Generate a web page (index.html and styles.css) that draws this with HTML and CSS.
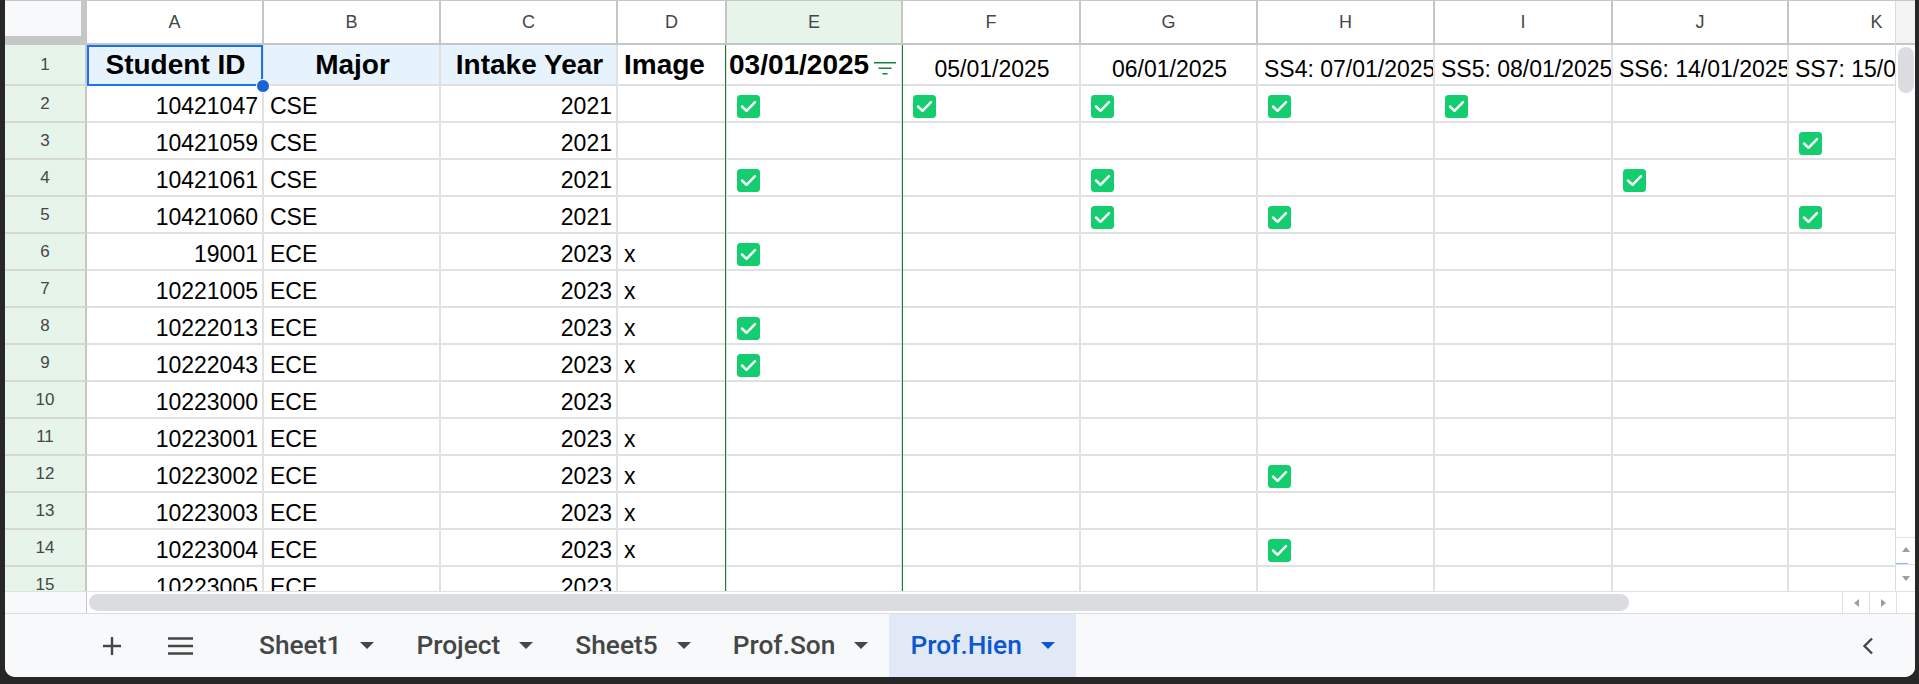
FILE: index.html
```html
<!DOCTYPE html>
<html>
<head>
<meta charset="utf-8">
<title>Sheet</title>
<link rel="stylesheet" href="styles.css">
</head>
<body>
<div class="window">
  <div class="main">
    <div class="grid">
      <div class="row hdr">
        <div class="c col-rh corner"></div>
        <div class="c col-a">A</div>
        <div class="c col-b">B</div>
        <div class="c col-c">C</div>
        <div class="c col-d">D</div>
        <div class="c col-e sel-col">E</div>
        <div class="c col-f">F</div>
        <div class="c col-g">G</div>
        <div class="c col-h">H</div>
        <div class="c col-i">I</div>
        <div class="c col-j">J</div>
        <div class="c col-k">K</div>
      </div>
      <div class="row r1">
        <div class="c rh col-rh">1</div>
        <div class="c col-a ctr blue sel">Student ID<span class="handle"></span></div>
        <div class="c col-b ctr blue">Major</div>
        <div class="c col-c ctr blue">Intake Year</div>
        <div class="c col-d">Image</div>
        <div class="c col-e es e1">03/01/2025<svg class="filt" viewBox="0 0 22 14"><path d="M0 1.75H22M4.5 7.25H17.5M8.5 12.75H13.5"/></svg></div>
        <div class="c col-f ctr reg">05/01/2025</div>
        <div class="c col-g ctr reg">06/01/2025</div>
        <div class="c col-h reg">SS4: 07/01/2025</div>
        <div class="c col-i reg">SS5: 08/01/2025</div>
        <div class="c col-j reg">SS6: 14/01/2025</div>
        <div class="c col-k reg">SS7: 15/01/2025</div>
      </div>
      <div class="row">
        <div class="c rh col-rh">2</div>
        <div class="c col-a num">10421047</div>
        <div class="c col-b">CSE</div>
        <div class="c col-c num">2021</div>
        <div class="c col-d"></div>
        <div class="c col-e es"><svg class="chk" viewBox="0 0 23 23"><rect width="23" height="23" rx="3.5"/><path d="M5 11.5L9.5 15.8L18 7.2"/></svg></div>
        <div class="c col-f"><svg class="chk" viewBox="0 0 23 23"><rect width="23" height="23" rx="3.5"/><path d="M5 11.5L9.5 15.8L18 7.2"/></svg></div>
        <div class="c col-g"><svg class="chk" viewBox="0 0 23 23"><rect width="23" height="23" rx="3.5"/><path d="M5 11.5L9.5 15.8L18 7.2"/></svg></div>
        <div class="c col-h"><svg class="chk" viewBox="0 0 23 23"><rect width="23" height="23" rx="3.5"/><path d="M5 11.5L9.5 15.8L18 7.2"/></svg></div>
        <div class="c col-i"><svg class="chk" viewBox="0 0 23 23"><rect width="23" height="23" rx="3.5"/><path d="M5 11.5L9.5 15.8L18 7.2"/></svg></div>
        <div class="c col-j"></div>
        <div class="c col-k"></div>
      </div>
      <div class="row">
        <div class="c rh col-rh">3</div>
        <div class="c col-a num">10421059</div>
        <div class="c col-b">CSE</div>
        <div class="c col-c num">2021</div>
        <div class="c col-d"></div>
        <div class="c col-e es"></div>
        <div class="c col-f"></div>
        <div class="c col-g"></div>
        <div class="c col-h"></div>
        <div class="c col-i"></div>
        <div class="c col-j"></div>
        <div class="c col-k"><svg class="chk" viewBox="0 0 23 23"><rect width="23" height="23" rx="3.5"/><path d="M5 11.5L9.5 15.8L18 7.2"/></svg></div>
      </div>
      <div class="row">
        <div class="c rh col-rh">4</div>
        <div class="c col-a num">10421061</div>
        <div class="c col-b">CSE</div>
        <div class="c col-c num">2021</div>
        <div class="c col-d"></div>
        <div class="c col-e es"><svg class="chk" viewBox="0 0 23 23"><rect width="23" height="23" rx="3.5"/><path d="M5 11.5L9.5 15.8L18 7.2"/></svg></div>
        <div class="c col-f"></div>
        <div class="c col-g"><svg class="chk" viewBox="0 0 23 23"><rect width="23" height="23" rx="3.5"/><path d="M5 11.5L9.5 15.8L18 7.2"/></svg></div>
        <div class="c col-h"></div>
        <div class="c col-i"></div>
        <div class="c col-j"><svg class="chk" viewBox="0 0 23 23"><rect width="23" height="23" rx="3.5"/><path d="M5 11.5L9.5 15.8L18 7.2"/></svg></div>
        <div class="c col-k"></div>
      </div>
      <div class="row">
        <div class="c rh col-rh">5</div>
        <div class="c col-a num">10421060</div>
        <div class="c col-b">CSE</div>
        <div class="c col-c num">2021</div>
        <div class="c col-d"></div>
        <div class="c col-e es"></div>
        <div class="c col-f"></div>
        <div class="c col-g"><svg class="chk" viewBox="0 0 23 23"><rect width="23" height="23" rx="3.5"/><path d="M5 11.5L9.5 15.8L18 7.2"/></svg></div>
        <div class="c col-h"><svg class="chk" viewBox="0 0 23 23"><rect width="23" height="23" rx="3.5"/><path d="M5 11.5L9.5 15.8L18 7.2"/></svg></div>
        <div class="c col-i"></div>
        <div class="c col-j"></div>
        <div class="c col-k"><svg class="chk" viewBox="0 0 23 23"><rect width="23" height="23" rx="3.5"/><path d="M5 11.5L9.5 15.8L18 7.2"/></svg></div>
      </div>
      <div class="row">
        <div class="c rh col-rh">6</div>
        <div class="c col-a num">19001</div>
        <div class="c col-b">ECE</div>
        <div class="c col-c num">2023</div>
        <div class="c col-d">x</div>
        <div class="c col-e es"><svg class="chk" viewBox="0 0 23 23"><rect width="23" height="23" rx="3.5"/><path d="M5 11.5L9.5 15.8L18 7.2"/></svg></div>
        <div class="c col-f"></div>
        <div class="c col-g"></div>
        <div class="c col-h"></div>
        <div class="c col-i"></div>
        <div class="c col-j"></div>
        <div class="c col-k"></div>
      </div>
      <div class="row">
        <div class="c rh col-rh">7</div>
        <div class="c col-a num">10221005</div>
        <div class="c col-b">ECE</div>
        <div class="c col-c num">2023</div>
        <div class="c col-d">x</div>
        <div class="c col-e es"></div>
        <div class="c col-f"></div>
        <div class="c col-g"></div>
        <div class="c col-h"></div>
        <div class="c col-i"></div>
        <div class="c col-j"></div>
        <div class="c col-k"></div>
      </div>
      <div class="row">
        <div class="c rh col-rh">8</div>
        <div class="c col-a num">10222013</div>
        <div class="c col-b">ECE</div>
        <div class="c col-c num">2023</div>
        <div class="c col-d">x</div>
        <div class="c col-e es"><svg class="chk" viewBox="0 0 23 23"><rect width="23" height="23" rx="3.5"/><path d="M5 11.5L9.5 15.8L18 7.2"/></svg></div>
        <div class="c col-f"></div>
        <div class="c col-g"></div>
        <div class="c col-h"></div>
        <div class="c col-i"></div>
        <div class="c col-j"></div>
        <div class="c col-k"></div>
      </div>
      <div class="row">
        <div class="c rh col-rh">9</div>
        <div class="c col-a num">10222043</div>
        <div class="c col-b">ECE</div>
        <div class="c col-c num">2023</div>
        <div class="c col-d">x</div>
        <div class="c col-e es"><svg class="chk" viewBox="0 0 23 23"><rect width="23" height="23" rx="3.5"/><path d="M5 11.5L9.5 15.8L18 7.2"/></svg></div>
        <div class="c col-f"></div>
        <div class="c col-g"></div>
        <div class="c col-h"></div>
        <div class="c col-i"></div>
        <div class="c col-j"></div>
        <div class="c col-k"></div>
      </div>
      <div class="row">
        <div class="c rh col-rh">10</div>
        <div class="c col-a num">10223000</div>
        <div class="c col-b">ECE</div>
        <div class="c col-c num">2023</div>
        <div class="c col-d"></div>
        <div class="c col-e es"></div>
        <div class="c col-f"></div>
        <div class="c col-g"></div>
        <div class="c col-h"></div>
        <div class="c col-i"></div>
        <div class="c col-j"></div>
        <div class="c col-k"></div>
      </div>
      <div class="row">
        <div class="c rh col-rh">11</div>
        <div class="c col-a num">10223001</div>
        <div class="c col-b">ECE</div>
        <div class="c col-c num">2023</div>
        <div class="c col-d">x</div>
        <div class="c col-e es"></div>
        <div class="c col-f"></div>
        <div class="c col-g"></div>
        <div class="c col-h"></div>
        <div class="c col-i"></div>
        <div class="c col-j"></div>
        <div class="c col-k"></div>
      </div>
      <div class="row">
        <div class="c rh col-rh">12</div>
        <div class="c col-a num">10223002</div>
        <div class="c col-b">ECE</div>
        <div class="c col-c num">2023</div>
        <div class="c col-d">x</div>
        <div class="c col-e es"></div>
        <div class="c col-f"></div>
        <div class="c col-g"></div>
        <div class="c col-h"><svg class="chk" viewBox="0 0 23 23"><rect width="23" height="23" rx="3.5"/><path d="M5 11.5L9.5 15.8L18 7.2"/></svg></div>
        <div class="c col-i"></div>
        <div class="c col-j"></div>
        <div class="c col-k"></div>
      </div>
      <div class="row">
        <div class="c rh col-rh">13</div>
        <div class="c col-a num">10223003</div>
        <div class="c col-b">ECE</div>
        <div class="c col-c num">2023</div>
        <div class="c col-d">x</div>
        <div class="c col-e es"></div>
        <div class="c col-f"></div>
        <div class="c col-g"></div>
        <div class="c col-h"></div>
        <div class="c col-i"></div>
        <div class="c col-j"></div>
        <div class="c col-k"></div>
      </div>
      <div class="row">
        <div class="c rh col-rh">14</div>
        <div class="c col-a num">10223004</div>
        <div class="c col-b">ECE</div>
        <div class="c col-c num">2023</div>
        <div class="c col-d">x</div>
        <div class="c col-e es"></div>
        <div class="c col-f"></div>
        <div class="c col-g"></div>
        <div class="c col-h"><svg class="chk" viewBox="0 0 23 23"><rect width="23" height="23" rx="3.5"/><path d="M5 11.5L9.5 15.8L18 7.2"/></svg></div>
        <div class="c col-i"></div>
        <div class="c col-j"></div>
        <div class="c col-k"></div>
      </div>
      <div class="row">
        <div class="c rh col-rh">15</div>
        <div class="c col-a num">10223005</div>
        <div class="c col-b">ECE</div>
        <div class="c col-c num">2023</div>
        <div class="c col-d"></div>
        <div class="c col-e es"></div>
        <div class="c col-f"></div>
        <div class="c col-g"></div>
        <div class="c col-h"></div>
        <div class="c col-i"></div>
        <div class="c col-j"></div>
        <div class="c col-k"></div>
      </div>
    </div>
    <div class="vscroll">
      <div class="vs-head"></div>
      <div class="vs-track"><div class="vs-thumb"></div></div>
      <div class="vs-btn up"><span class="arr-up"></span></div>
      <div class="vs-btn down"><span class="arr-down"></span></div>
    </div>
  </div>
  <div class="hscroll">
    <div class="hs-left"></div>
    <div class="hs-track"><div class="hs-thumb"></div></div>
    <div class="hs-btn"><span class="arr-left"></span></div>
    <div class="hs-btn"><span class="arr-right"></span></div>
    <div class="hs-corner"></div>
  </div>
  <div class="tabbar">
    <div class="tb-btn add"><svg viewBox="0 0 20 20"><path d="M10 1V19M1 10H19"/></svg></div>
    <div class="tb-btn menu"><svg viewBox="0 0 25 18"><path d="M0 1.5H25M0 9H25M0 16.5H25"/></svg></div>
    <div class="tabs">
      <div class="tab"><span>Sheet1</span><svg class="tri" viewBox="0 0 14 7"><path d="M0 0H14L7 7Z"/></svg></div>
      <div class="tab"><span>Project</span><svg class="tri" viewBox="0 0 14 7"><path d="M0 0H14L7 7Z"/></svg></div>
      <div class="tab"><span>Sheet5</span><svg class="tri" viewBox="0 0 14 7"><path d="M0 0H14L7 7Z"/></svg></div>
      <div class="tab"><span>Prof.Son</span><svg class="tri" viewBox="0 0 14 7"><path d="M0 0H14L7 7Z"/></svg></div>
      <div class="tab active"><span>Prof.Hien</span><svg class="tri" viewBox="0 0 14 7"><path d="M0 0H14L7 7Z"/></svg></div>
    </div>
    <div class="tb-btn chev"><svg viewBox="0 0 12 18"><path d="M10 1.5L2.5 9L10 16.5"/></svg></div>
  </div>
</div>
</body>
</html>
```

FILE: styles.css
```css
* { box-sizing: border-box; }
html, body { margin: 0; padding: 0; }
body {
  width: 1919px;
  height: 684px;
  overflow: hidden;
  background: #272727;
  font-family: "Liberation Sans", Arial, sans-serif;
}
.window {
  margin-left: 5px;
  width: 1910px;
  height: 677px;
  background: #fff;
  border-radius: 0 0 10px 10px;
  overflow: hidden;
  display: flex;
  flex-direction: column;
}
.main {
  flex: none;
  height: 591px;
  display: flex;
  border-top: 1px solid #c7c7c7;
}
.grid {
  flex: none;
  width: 1890px;
  height: 100%;
  overflow: hidden;
}
.row { display: flex; height: 37px; }
.row.hdr { height: 44px; }
.row.r1 { height: 41px; }

.c {
  flex: none;
  height: 100%;
  display: flex;
  align-items: flex-end;
  padding: 0 4px 3px 6px;
  border-right: 2px solid #e1e1e1;
  border-bottom: 2px solid #e1e1e1;
  overflow: hidden;
  white-space: nowrap;
  font-size: 23px;
  line-height: 23px;
  color: #000;
}
.col-rh { width: 82px; }
.col-a { width: 177px; }
.col-b { width: 177px; }
.col-c { width: 177px; }
.col-d { width: 109px; }
.col-e { width: 176px; }
.col-f { width: 178px; }
.col-g { width: 177px; }
.col-h { width: 177px; }
.col-i { width: 178px; }
.col-j { width: 176px; }
.col-k { width: 177px; }

.num { justify-content: flex-end; }
.ctr { justify-content: center; }

.r1 .c { font-weight: 700; font-size: 28px; line-height: 28px; padding-bottom: 5px; }
.r1 .c.reg { font-weight: 400; font-size: 23px; line-height: 23px; padding-bottom: 3px; }
.r1 .c.e1 { padding-left: 2px; }
.blue { background: #e7f3fc; }

.hdr .c {
  align-items: center;
  justify-content: center;
  padding: 0;
  font-size: 18px;
  line-height: 18px;
  color: #444746;
  border-right-color: #c4c7c5;
  border-bottom-color: #c4c7c5;
}
.hdr .c.sel-col { background: #e6f4ea; }
.hdr .corner {
  background: #f8f9fa;
  border-right: 6px solid #c4c7c5;
  border-bottom: 9px solid #c4c7c5;
}
.row .rh {
  align-items: center;
  justify-content: center;
  padding: 0;
  background: #e6f4ea;
  font-weight: 400;
  font-size: 17px;
  line-height: 17px;
  color: #444746;
  border-right-color: #c4c7c5;
  border-bottom-color: #d5d8d6;
}

.chk { display: block; flex: none; width: 23px; height: 23px; margin-left: 4px; }
.chk rect { fill: #14cd6e; }
.chk path { fill: none; stroke: #fff; stroke-width: 2.5; stroke-linecap: round; stroke-linejoin: round; }

.filt { display: block; flex: none; width: 22px; height: 14px; margin: 0 1px 4px auto; }
.filt path { fill: none; stroke: #188038; stroke-width: 1.6; }

.es { position: relative; overflow: visible; }
.es::before {
  content: "";
  position: absolute;
  top: 0;
  bottom: -2px;
  left: -2px;
  right: -2px;
  border-left: 1px solid #188038;
  border-right: 1px solid #188038;
  pointer-events: none;
}

.sel { position: relative; overflow: visible; }
.sel::after {
  content: "";
  position: absolute;
  top: 0;
  left: 0;
  right: -1px;
  bottom: -2px;
  border: 2px solid #1a73e8;
  pointer-events: none;
}
.handle {
  position: absolute;
  right: -8px;
  bottom: -9px;
  width: 14px;
  height: 14px;
  border-radius: 50%;
  background: #1a62d6;
  border: 1.5px solid #fff;
  z-index: 2;
}

/* vertical scrollbar */
.vscroll {
  flex: none;
  width: 20px;
  border-left: 1px solid #dadce0;
  display: flex;
  flex-direction: column;
}
.vs-head {
  flex: none;
  height: 44px;
  background: #f3f3f3;
  border-bottom: 2px solid #c4c7c5;
}
.vs-track { flex: 1; display: flex; justify-content: center; }
.vs-thumb {
  width: 16px;
  height: 46px;
  margin-top: 2px;
  border-radius: 8px;
  background: #dadce0;
}
.vs-btn {
  flex: none;
  height: 27px;
  border-top: 1px solid #e1e1e1;
  display: flex;
  align-items: center;
  justify-content: center;
}
.vs-btn.up { position: relative; }
.vs-btn.up::after {
  content: "";
  position: absolute;
  left: 0;
  bottom: 0;
  width: 12px;
  height: 1px;
  background: #8ab4f8;
}
.arr-up {
  margin-bottom: 4px;
  border-left: 4.5px solid transparent;
  border-right: 4.5px solid transparent;
  border-bottom: 5px solid #9e9e9e;
}
.arr-down {
  border-left: 4.5px solid transparent;
  border-right: 4.5px solid transparent;
  border-top: 5px solid #9e9e9e;
}

/* horizontal scrollbar */
.hscroll {
  flex: none;
  height: 22px;
  display: flex;
  border-top: 1px solid #e1e1e1;
}
.hs-left {
  flex: none;
  width: 82px;
  background: #f8f9fa;
  border-right: 1px solid #c4c7c5;
}
.hs-track { flex: 1; }
.hs-thumb {
  width: 1540px;
  height: 17px;
  margin: 2px 0 0 2px;
  border-radius: 9px;
  background: #dadce0;
}
.hs-btn {
  flex: none;
  width: 27px;
  border-left: 1px solid #e1e1e1;
  display: flex;
  align-items: center;
  justify-content: center;
}
.hs-corner { flex: none; width: 19px; border-left: 1px solid #e1e1e1; }
.arr-left {
  border-top: 4.5px solid transparent;
  border-bottom: 4.5px solid transparent;
  border-right: 5px solid #9e9e9e;
}
.arr-right {
  border-top: 4.5px solid transparent;
  border-bottom: 4.5px solid transparent;
  border-left: 5px solid #9e9e9e;
}

/* sheet tabs */
.tabbar {
  flex: 1;
  display: flex;
  align-items: center;
  background: #f8f9fa;
  border-top: 1px solid #dadce0;
}
.tb-btn {
  flex: none;
  width: 40px;
  height: 40px;
  display: flex;
  align-items: center;
  justify-content: center;
}
.tb-btn svg { display: block; fill: none; stroke: #444746; stroke-width: 2.4; }
.add { margin-left: 87px; }
.add svg { width: 20px; height: 20px; }
.menu { margin-left: 28.5px; }
.menu svg { width: 25px; height: 18px; }
.tabs { display: flex; align-self: stretch; margin-left: 37.5px; }
.tab {
  display: flex;
  align-items: center;
  gap: 19px;
  padding: 0 21px;
  font-family: Roboto, "Liberation Sans", sans-serif;
  font-weight: 500;
  font-size: 26.3px;
  line-height: 27px;
  color: #444746;
  white-space: nowrap;
}
.tri { display: block; width: 14px; height: 7px; fill: #444746; }
.tab.active { background: #e1e9f7; color: #0b57d0; }
.tab.active .tri { fill: #0b57d0; }
.chev { margin-left: auto; margin-right: 27.5px; }
.chev svg { width: 12px; height: 18px; }
```
